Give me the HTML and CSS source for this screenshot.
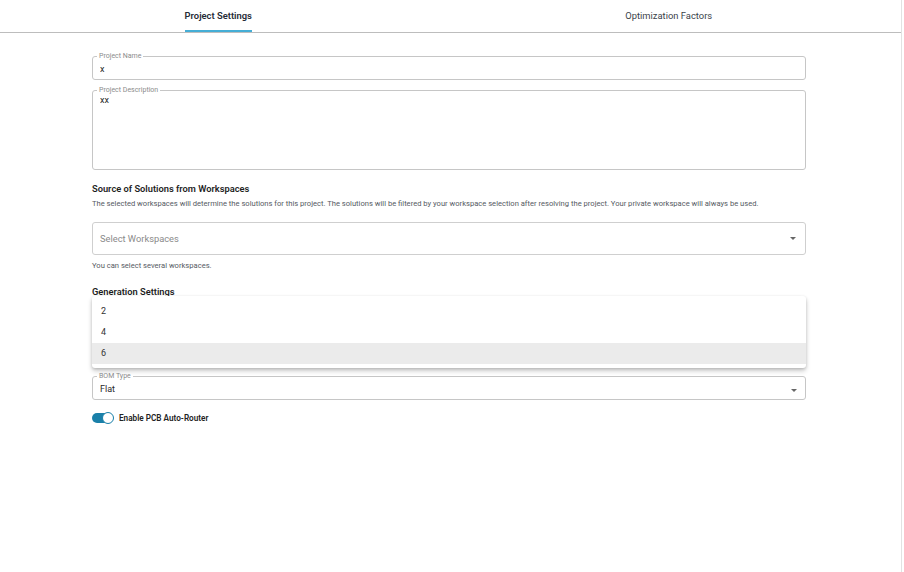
FILE: index.html
```html
<!DOCTYPE html>
<html lang="en">
  <head>
    <meta charset="UTF-8" />
    <meta name="viewport" content="width=device-width, initial-scale=1.0" />
    <title>Project Settings</title>
    <link rel="stylesheet" href="styles.css">
  </head>
  <body>
    <div class="page">
      <div class="tabs">
        <div class="tab active"><span class="tab-label">Project Settings</span></div>
        <div class="tab"><span class="tab-label">Optimization Factors</span></div>
      </div>
      <div class="content">
        <fieldset class="field">
          <legend>Project Name</legend>
          <input type="text" value="x" />
        </fieldset>
        <fieldset class="field field-area">
          <legend>Project Description</legend>
          <textarea>xx</textarea>
        </fieldset>

        <h3 class="section-title first">Source of Solutions from Workspaces</h3>
        <p class="section-text">
          The selected workspaces will determine the solutions for this project. The solutions will be filtered by your workspace selection after resolving the project. Your private workspace will always be used.
        </p>
        <div class="select-box">
          <span class="placeholder">Select Workspaces</span>
          <span class="arrow"></span>
        </div>
        <p class="helper">You can select several workspaces.</p>

        <div class="gen">
          <h3 class="section-title">Generation Settings</h3>
          <fieldset class="field field-bom">
            <legend>BOM Type</legend>
            <div class="value">Flat</div>
            <span class="arrow"></span>
          </fieldset>
          <label class="toggle-row">
            <span class="toggle"><span class="thumb"></span></span>
            <span class="toggle-text">Enable PCB Auto-Router</span>
          </label>

          <ul class="menu">
            <li>2</li>
            <li>4</li>
            <li class="selected">6</li>
          </ul>
        </div>
      </div>
    </div>
  </body>
</html>
```

FILE: styles.css
```css
/* Reset */
* {
  margin: 0;
  padding: 0;
  box-sizing: border-box;
}
body {
  font-family: Roboto, "Liberation Sans", Arial, sans-serif;
  background: #fff;
  color: #222;
}
.page {
  width: 902px;
  min-height: 100vh;
  border-right: 1px solid #e2e2e2;
}
.tabs {
  display: flex;
  height: 33px;
  border-bottom: 1px solid #bdbdbd;
}
.tab {
  flex: 1;
  display: flex;
  justify-content: center;
  padding-right: 14px;
}
.tab-label {
  display: flex;
  align-items: center;
  padding-top: 1px;
  border-bottom: 2px solid transparent;
  font-size: 9.4px;
  color: #3a3f4a;
}
.tab.active .tab-label {
  font-weight: 600;
  color: #262b36;
  border-bottom-color: #45aed6;
}
.content {
  width: 806px;
  padding: 19px 0 0 92px;
}
.field {
  border: 1px solid #c6c6c6;
  border-radius: 3px;
  padding: 0 8px 3px 7px;
  position: relative;
}
.field legend {
  font-size: 7px;
  line-height: 8px;
  color: #8c8c8c;
  padding: 0 2px;
  margin-left: -3px;
}
.field input,
.field textarea {
  display: block;
  width: 100%;
  border: none;
  outline: none;
  background: transparent;
  font-family: inherit;
  font-size: 9px;
  color: #2a2a2a;
}
.field input {
  height: 14px;
  margin-top: 2px;
}
.field-area {
  margin-top: 6px;
}
.field textarea {
  height: 72px;
  resize: none;
  padding-top: 1px;
}
.section-title {
  font-size: 9.3px;
  line-height: 12px;
  font-weight: 600;
  color: #1e1e1e;
  margin-top: 15px;
}
.section-title.first {
  margin-top: 13px;
}
.section-text {
  font-size: 7.6px;
  line-height: 10px;
  color: #555a63;
  margin-top: 4px;
  white-space: nowrap;
}
.select-box {
  display: flex;
  align-items: center;
  justify-content: space-between;
  height: 33px;
  margin-top: 13px;
  border: 1px solid #cfcfcf;
  border-radius: 3px;
  padding: 0 9px 0 7px;
}
.placeholder {
  font-size: 9.3px;
  color: #8a8a8a;
}
.arrow {
  width: 0;
  height: 0;
  border-left: 3px solid transparent;
  border-right: 3px solid transparent;
  border-top: 3px solid #666;
}
.helper {
  font-size: 7.6px;
  line-height: 10px;
  color: #555a63;
  margin-top: 6px;
}
.gen {
  position: relative;
}
.value {
  font-size: 9px;
  line-height: 14px;
  margin-top: 2px;
  color: #2a2a2a;
}
.field .arrow {
  position: absolute;
  right: 8px;
  top: 9px;
}
.field-bom {
  margin-top: 74px;
}
.toggle-row {
  display: flex;
  align-items: center;
  gap: 6px;
  margin-top: 12px;
  height: 12px;
}
.toggle {
  position: relative;
  width: 21px;
  height: 10px;
  border-radius: 5px;
  background: #1a80a9;
}
.thumb {
  position: absolute;
  right: -1px;
  top: -1px;
  width: 12px;
  height: 12px;
  border-radius: 50%;
  background: #fff;
  border: 1.5px solid #1a80a9;
}
.toggle-text {
  font-size: 8.2px;
  font-weight: 600;
  color: #222;
}
.menu {
  position: absolute;
  left: 0;
  right: 0;
  top: 10px;
  list-style: none;
  background: #fff;
  border-radius: 3px;
  padding: 5px 0 4px;
  box-shadow: 0 3px 5px rgba(0, 0, 0, 0.2), 0 1px 3px rgba(0, 0, 0, 0.14);
}
.menu li {
  height: 21px;
  line-height: 21px;
  padding-left: 9px;
  font-size: 9px;
  color: #333;
}
.menu li.selected {
  background: #ebebeb;
}
```
